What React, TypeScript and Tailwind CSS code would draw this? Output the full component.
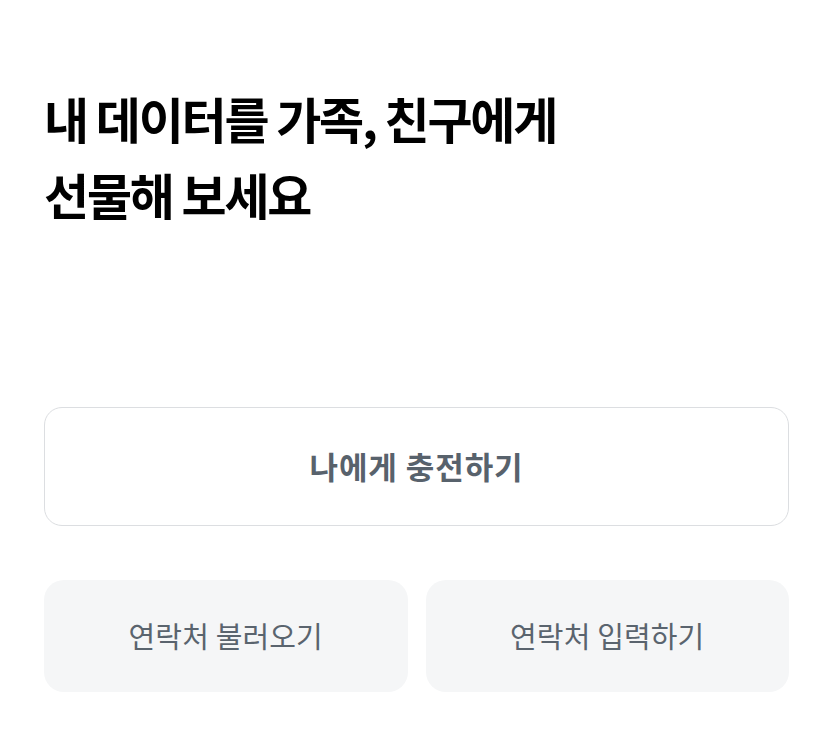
import React from "react";

export default function App() {
  return (
    <div className="min-h-[750px] w-[833px] bg-white px-[44px] pt-[80px]" style={{ fontFamily: '"Noto Sans CJK KR", "Noto Sans", sans-serif' }}>
      <h1 className="text-[49px] font-bold leading-[76px] tracking-[-0.045em] text-black">
        내 데이터를 가족, 친구에게
        <br />
        선물해 보세요
      </h1>
      <div className="mt-[175px] flex flex-col">
        <button className="flex h-[119px] w-full items-center justify-center rounded-[18px] border border-[#dcdee1] bg-white text-[31px] font-semibold tracking-[0.03em] text-[#58626c]">
          나에게 충전하기
        </button>
        <div className="mt-[54px] grid grid-cols-2 gap-[18px]">
          <button className="flex h-[112px] items-center justify-center rounded-[20px] bg-[#f5f6f7] text-[29px] font-normal tracking-[0.005em] text-[#5a646e]">
            연락처 불러오기
          </button>
          <button className="flex h-[112px] items-center justify-center rounded-[20px] bg-[#f5f6f7] text-[29px] font-normal tracking-[0.005em] text-[#5a646e]">
            연락처 입력하기
          </button>
        </div>
      </div>
    </div>
  );
}
